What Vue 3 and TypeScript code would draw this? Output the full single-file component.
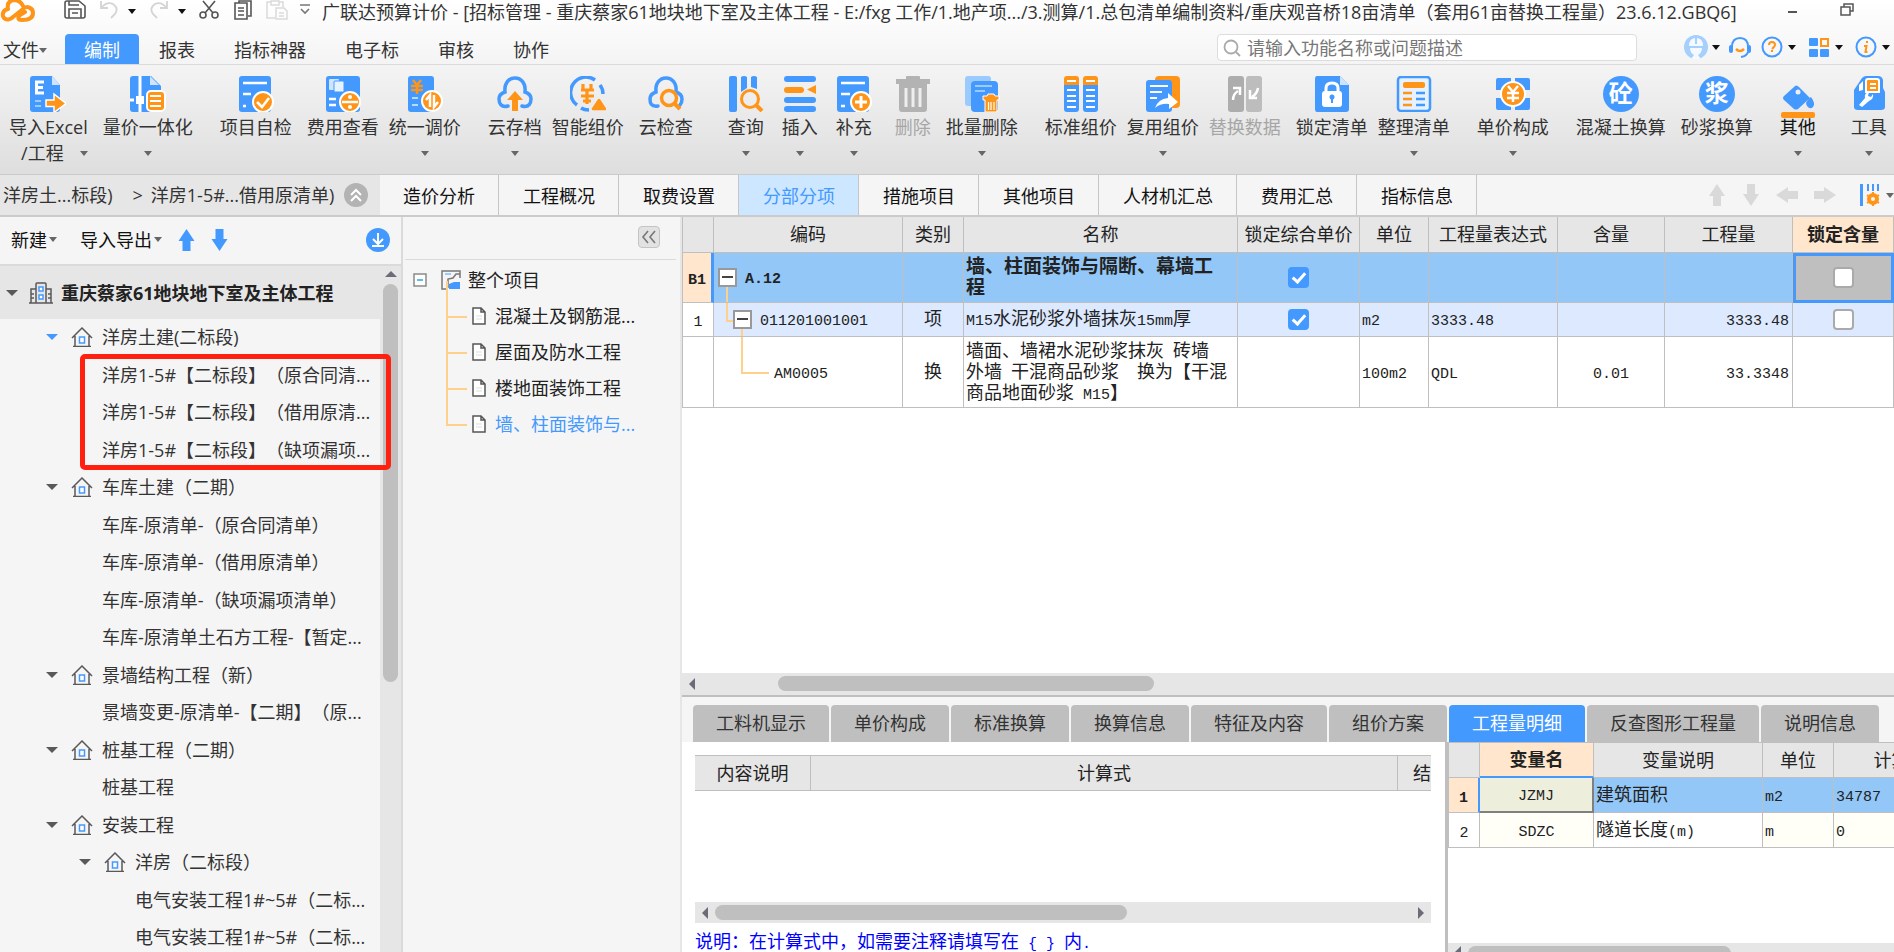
<script setup lang="ts">
import { ref } from 'vue'

type Gap = 'g10' | 'g15' | 'g18' | 'g23' | 'g27' | 'g35'
interface Tool { label: string; icon?: string; disc?: string; gap?: Gap; menu?: boolean; disabled?: boolean; second?: string; strong?: boolean }
interface Node { text: string; level: number; open?: boolean; active?: boolean }

const menus = ['编制', '报表', '指标神器', '电子标', '审核', '协作']
const activeMenu = ref('编制')

const tools: Tool[] = [
  { label: '导入Excel', second: '/工程', icon: 'excel', menu: true },
  { label: '量价一体化', icon: 'integrate', gap: 'g15', menu: true },
  { label: '项目自检', icon: 'check', gap: 'g27' },
  { label: '费用查看', icon: 'fee', gap: 'g15' },
  { label: '统一调价', icon: 'adjust', gap: 'g10', menu: true },
  { label: '云存档', icon: 'cloudup', gap: 'g27', menu: true },
  { label: '智能组价', icon: 'smart', gap: 'g10' },
  { label: '云检查', icon: 'cloudfind', gap: 'g15' },
  { label: '查询', icon: 'query', gap: 'g35', menu: true },
  { label: '插入', icon: 'insert', gap: 'g18', menu: true },
  { label: '补充', icon: 'supply', gap: 'g18', menu: true },
  { label: '删除', icon: 'trash', gap: 'g23', disabled: true },
  { label: '批量删除', icon: 'batch', gap: 'g15', menu: true },
  { label: '标准组价', icon: 'standard', gap: 'g27' },
  { label: '复用组价', icon: 'reuse', gap: 'g10', menu: true },
  { label: '替换数据', icon: 'replace', gap: 'g10', disabled: true },
  { label: '锁定清单', icon: 'lock', gap: 'g15' },
  { label: '整理清单', icon: 'arrange', gap: 'g10', menu: true },
  { label: '单价构成', icon: 'price', gap: 'g27', menu: true },
  { label: '混凝土换算', disc: '砼', gap: 'g27' },
  { label: '砂浆换算', disc: '浆', gap: 'g15' },
  { label: '其他', icon: 'bucket', gap: 'g27', menu: true, strong: true },
  { label: '工具', icon: 'toolbox', gap: 'g35', menu: true },
]

const pages = ['造价分析', '工程概况', '取费设置', '分部分项', '措施项目', '其他项目', '人材机汇总', '费用汇总', '指标信息']
const activePage = ref('分部分项')

const nodes: Node[] = [
  { text: '洋房土建(二标段)', level: 1, open: true, active: true },
  { text: '洋房1-5#【二标段】（原合同清...', level: 1 },
  { text: '洋房1-5#【二标段】（借用原清...', level: 1 },
  { text: '洋房1-5#【二标段】（缺项漏项...', level: 1 },
  { text: '车库土建（二期）', level: 1, open: true },
  { text: '车库-原清单-（原合同清单）', level: 1 },
  { text: '车库-原清单-（借用原清单）', level: 1 },
  { text: '车库-原清单-（缺项漏项清单）', level: 1 },
  { text: '车库-原清单土石方工程-【暂定...', level: 1 },
  { text: '景墙结构工程（新）', level: 1, open: true },
  { text: '景墙变更-原清单-【二期】（原...', level: 1 },
  { text: '桩基工程（二期）', level: 1, open: true },
  { text: '桩基工程', level: 1 },
  { text: '安装工程', level: 1, open: true },
  { text: '洋房（二标段）', level: 2, open: true },
  { text: '电气安装工程1#~5#（二标...', level: 2 },
  { text: '电气安装工程1#~5#（二标...', level: 2 },
]

const sections = ['混凝土及钢筋混...', '屋面及防水工程', '楼地面装饰工程', '墙、柱面装饰与...']
const activeSection = ref('墙、柱面装饰与...')

const columns = ['编码', '类别', '名称', '锁定综合单价', '单位', '工程量表达式', '含量', '工程量', '锁定含量']

const details = ['工料机显示', '单价构成', '标准换算', '换算信息', '特征及内容', '组价方案', '工程量明细', '反查图形工程量', '说明信息']
const activeDetail = ref('工程量明细')

const priceLock = ref([true, true])
const contentLock = ref([false, false])

// Latin runs use a monospaced face half as wide as the ideographs around them.
const runs = (s: string) =>
  s.split(/([\x20-\x7e]+)/).filter(Boolean).map(t => ({ t, latin: /^[\x20-\x7e]/.test(t) }))
</script>

<template>
  <div class="app">
    <svg class="defs" aria-hidden="true">
      <symbol id="excel" viewBox="0 0 36 36">
        <path d="M3 0h19l8 9v24q0 3-3 3H3q-3 0-3-3V3q0-3 3-3z" fill="#4499ff" /><path d="M22 0l8 9h-8z" fill="#cfe5ff" />
        <path d="M14 6H6.500v11H14M6 11.500h7" fill="none" stroke="#fff" stroke-width="3" />
        <path d="M5 25h6M5 30h6" stroke="#9bcaff" stroke-width="2" />
        <path d="M16 24h8v-6l12 9.500-12 9v-6h-8z" fill="#ff9518" stroke="#fff" stroke-width="1.500" />
      </symbol>
      <symbol id="integrate" viewBox="0 0 36 36">
        <path d="M3 0h18l10 10v26H3q-3 0-3-3V3q0-3 3-3z" fill="#4499ff" /><path d="M20 0l9 9h-9z" fill="#cfe5ff" />
        <path d="M10 0v20M10 28v8M0 24h4" stroke="#fff" stroke-width="3" /><rect x="6" y="20" width="8" height="8" fill="#fff" />
        <rect x="17" y="15" width="18" height="20" rx="4" fill="#ff9518" stroke="#fff" stroke-width="2" />
        <path d="M20 20h11M20 25h11M20 30h11" stroke="#fff" stroke-width="2" />
      </symbol>
      <symbol id="check" viewBox="0 0 36 36">
        <rect x="1" width="32" height="36" rx="3" fill="#4499ff" /><path d="M5 7h24M5 18h8M5 30h3" stroke="#fff" stroke-width="2.500" />
        <circle cx="25" cy="26" r="10" fill="#ff9518" stroke="#fff" stroke-width="2" /><path d="M19 26l5 5 7-9" fill="none" stroke="#fff" stroke-width="2.500" />
      </symbol>
      <symbol id="fee" viewBox="0 0 36 36">
        <rect x="1" width="34" height="36" rx="3" fill="#4499ff" /><rect x="4" y="3" width="10" height="11" rx="1" fill="#cfe5ff" /><rect x="9" y="5" width="10" height="11" rx="1" fill="#e6f2ff" stroke="#4499ff" stroke-width="1" />
        <path d="M4 23h7M4 29h7" stroke="#fff" stroke-width="2.500" /><circle cx="25" cy="26" r="10" fill="#ff9518" stroke="#fff" stroke-width="2" />
        <path d="M17 26h16" stroke="#fff" stroke-width="2.500" /><circle cx="25" cy="21" r="2" fill="#fff" /><circle cx="25" cy="31" r="2" fill="#fff" />
      </symbol>
      <symbol id="adjust" viewBox="0 0 36 36">
        <rect x="1" width="26" height="36" rx="3" fill="#4499ff" /><path d="M6 4l4 5 4-5M4 10h12M4 14h12M10 9v9" fill="none" stroke="#ff9518" stroke-width="2.500" />
        <path d="M5 22h6M5 29h6" stroke="#b9daff" stroke-width="2" /><circle cx="25" cy="25" r="10" fill="#ff9518" stroke="#fff" stroke-width="2" />
        <path d="M23 31V19l-4 5M27 19v12l4-5" fill="none" stroke="#fff" stroke-width="2.500" />
      </symbol>
      <symbol id="cloudup" viewBox="0 0 36 36">
        <path d="M11 30C4 32 2 27 2 23q0-5 6-7C7 7 12 2 18 2s11 5 10 14q6 2 6 7c0 4-2 9-9 7" fill="none" stroke="#4499ff" stroke-width="3.500" stroke-linecap="round" />
        <path d="M18 15l8 9h-5v11h-6V24h-5z" fill="#ff9518" />
      </symbol>
      <symbol id="smart" viewBox="0 0 36 36">
        <path d="M25 4A15 15 0 1 0 7 29M30 9q3 4 3 9M11 32q3 2 8 2" fill="none" stroke="#4499ff" stroke-width="3.500" />
        <path d="M13 8v5M21 8v5M11 14h13M11 20h13M17 13v15M13 25h8" fill="none" stroke="#ff9518" stroke-width="3.200" />
        <path d="M29 24l6 9H23z" fill="#ff9518" stroke="#ff9518" stroke-width="2.500" stroke-linejoin="round" />
      </symbol>
      <symbol id="cloudfind" viewBox="0 0 36 36">
        <path d="M10 30C3 31 2 27 2 23q0-5 6-7C7 7 12 2 18 2s11 5 10 14q6 2 6 7c0 3-1 5-2 6" fill="none" stroke="#4499ff" stroke-width="3.500" stroke-linecap="round" />
        <circle cx="21" cy="22" r="7.500" fill="none" stroke="#ff9518" stroke-width="3.500" /><path d="M26 27l6 6" stroke="#ff9518" stroke-width="4" />
      </symbol>
      <symbol id="query" viewBox="0 0 36 36">
        <rect x="1" width="8" height="36" rx="2" fill="#4499ff" /><path d="M13 1q3-2 6 0v11l-6 4zM23 1q3-2 6 0v12l-6-2z" fill="#4499ff" />
        <circle cx="22" cy="23" r="8.500" fill="none" stroke="#ff9518" stroke-width="3" /><path d="M28 29l6 6" stroke="#ff9518" stroke-width="4" />
      </symbol>
      <symbol id="insert" viewBox="0 0 36 36">
        <rect x="2" width="32" height="6" rx="3" fill="#4499ff" /><rect x="2" y="11" width="20" height="6" rx="3" fill="#ff9518" /><path d="M34 9v9l-9-4.500z" fill="#ff9518" />
        <rect x="2" y="21" width="32" height="6" rx="3" fill="#4499ff" /><rect x="2" y="30" width="32" height="6" rx="3" fill="#4499ff" />
      </symbol>
      <symbol id="supply" viewBox="0 0 36 36">
        <rect x="1" width="32" height="36" rx="3" fill="#4499ff" /><path d="M5 7h24M5 18h9M5 30h4" stroke="#fff" stroke-width="2.500" />
        <circle cx="25" cy="26" r="10" fill="#ff9518" stroke="#fff" stroke-width="2" /><path d="M19 26h12M25 20v12" stroke="#fff" stroke-width="3" />
      </symbol>
      <symbol id="trash" viewBox="0 0 36 36">
        <path d="M1 3h10V1q0-1 1-1h12q1 0 1 1v2h10v5H1zM4 8h28v25q0 3-3 3H7q-3 0-3-3z" fill="#b3b3b3" />
        <path d="M11 12v19M18 12v19M25 12v19" stroke="#eee" stroke-width="3" />
      </symbol>
      <symbol id="batch" viewBox="0 0 36 36">
        <rect x="1" width="26" height="30" rx="3" fill="#9bcaff" /><rect x="7" y="5" width="27" height="31" rx="4" fill="#4499ff" /><path d="M11 10h17M11 15h10" stroke="#9bcaff" stroke-width="2" />
        <path d="M19 20h4l1-2h6l1 2h4v4h-2v12H21V24h-2z" fill="#ff9518" stroke="#fff" stroke-width="1" /><path d="M24.500 26v8M27 26v8M30 26v8" stroke="#fff" stroke-width="1.200" />
      </symbol>
      <symbol id="standard" viewBox="0 0 36 36">
        <path d="M1 9V3q0-3 3-3h9q3 0 3 3v6zM20 9V3q0-3 3-3h9q3 0 3 3v6z" fill="#ff9518" />
        <path d="M1 9h15v24q0 3-3 3H4q-3 0-3-3zM20 9h15v24q0 3-3 3h-9q-3 0-3-3z" fill="#4499ff" />
        <path d="M4 5h9M4 14h9M4 20h9M4 25h9M4 31h9M23 5h9M23 14h9M23 20h9M23 25h9M23 31h9" stroke="#fff" stroke-width="2" />
      </symbol>
      <symbol id="reuse" viewBox="0 0 36 36">
        <rect x="10" width="25" height="32" rx="4" fill="#ff9518" /><rect x="1" y="4" width="26" height="32" rx="3" fill="#4499ff" />
        <path d="M5 10h18M5 16h12M5 22h7" stroke="#fff" stroke-width="2" />
        <path d="M10 32q3-9 13-10v-5l10 9-9 7v-5q-8-1-14 4z" fill="#fff" />
      </symbol>
      <symbol id="replace" viewBox="0 0 36 36">
        <rect x="1" width="16" height="36" rx="3" fill="#adadad" /><rect x="19" width="16" height="36" rx="3" fill="#bdbdbd" />
        <path d="M6 24q0-6 5-9M6 12h7v7M31 12q-1 6-6 9M23 14v8h7" fill="none" stroke="#fff" stroke-width="2.500" />
      </symbol>
      <symbol id="lock" viewBox="0 0 36 36">
        <path d="M3 0h23l9 9v24q0 3-3 3H3q-2 0-2-3V3q0-3 2-3z" fill="#4499ff" /><path d="M26 0l9 9h-9z" fill="#cfe5ff" />
        <rect x="8" y="15" width="20" height="16" rx="3" fill="#fff" /><path d="M12 16v-4q0-5 6-5t6 5v4" fill="none" stroke="#fff" stroke-width="3" />
        <circle cx="18" cy="21" r="2.500" fill="#4499ff" /><path d="M18 21v6" stroke="#4499ff" stroke-width="2" />
      </symbol>
      <symbol id="arrange" viewBox="0 0 36 36">
        <rect x="2" y="1" width="32" height="34" rx="3" fill="#e6f2ff" stroke="#4499ff" stroke-width="2.500" /><rect x="7" y="6" width="22" height="6" rx="2" fill="#ff9518" />
        <path d="M7 17h9M7 23h9M7 29h9" stroke="#ff9518" stroke-width="2.500" /><path d="M20 17h9M20 23h9M20 29h9" stroke="#4499ff" stroke-width="2.500" />
      </symbol>
      <symbol id="price" viewBox="0 0 36 36">
        <path d="M3 2h13v12H1V4q0-2 2-2zM20 2h13q2 0 2 2v10H20zM1 22h15v12H3q-2 0-2-2zM20 22h15v10q0 2-2 2H20z" fill="#4499ff" />
        <circle cx="18" cy="18" r="12" fill="#ff9518" stroke="#fff" stroke-width="2" /><path d="M13 10l5 6 5-6M12 17h12M12 22h12M18 16v10" fill="none" stroke="#fff" stroke-width="2.500" />
      </symbol>
      <symbol id="bucket" viewBox="0 0 36 36">
        <path d="M14 4q2-3 5 0l11 11-12 11q-2 1-4 0L4 17q-2-2 0-4z" fill="#4499ff" /><circle cx="18" cy="9" r="2.500" fill="#eee" /><path d="M31 14q5 7 2 10t-6-1 4-9z" fill="#4499ff" />
        <rect x="1" y="29" width="34" height="6" rx="2" fill="#ff9518" />
      </symbol>
      <symbol id="toolbox" viewBox="0 0 36 36">
        <path d="M3 14L11 2q2-2 4-2h12q4 0 5 4v8l2 4v15q0 3-4 3H7q-4 0-4-3z" fill="#4499ff" /><path d="M8 15V9l4-4v9z" fill="#fff" /><path d="M15 16V5q0-2 2-2h9q2 0 2 2v11z" fill="#ff9518" stroke="#fff" stroke-width="2" />
        <path d="M19 8h6M19 12h6" stroke="#fff" stroke-width="2" /><path d="M8 29l6-7q-1-5 4-6l-1 4 3 1 2-3q1 5-4 7l-7 6z" fill="#fff" />
      </symbol>
      <symbol id="up" viewBox="0 0 16 22"><path d="M8 0l8 12h-4v10H4V12H0z" fill="currentColor" /></symbol>
      <symbol id="down" viewBox="0 0 16 22"><path d="M8 22l8-12h-4V0H4v10H0z" fill="currentColor" /></symbol>
      <symbol id="left" viewBox="0 0 22 16"><path d="M0 8l12-8v4h10v8H12v4z" fill="currentColor" /></symbol>
      <symbol id="right" viewBox="0 0 22 16"><path d="M22 8L10 0v4H0v8h10v4z" fill="currentColor" /></symbol>
      <symbol id="house" viewBox="0 0 22 20">
        <path d="M1 11L11 1l10 10M4 9v10M18 9v10M2 19.500h18" fill="none" stroke="#595959" stroke-width="1.500" /><path d="M8.500 10h5v6h-5z" fill="#fff" stroke="#4499ff" stroke-width="1.500" />
      </symbol>
      <symbol id="page" viewBox="0 0 14 18"><path d="M1 1h8l4 4v12H1zM9 1v4h4" fill="#fff" stroke="#555" stroke-width="1.500" /><path d="M4 9h6M4 12h6" stroke="#ddd" /></symbol>
    </svg>

    <header class="top">
      <div class="titlebar">
        <svg class="logo" viewBox="0 0 36 24" aria-hidden="true"><path d="M23 6C21 1 17 0 13 0 9 1 7 4 8 9 2 10 2 16 4 18 7 21 11 19 13 17L23 9C27 5 33 8 33 13 33 18 28 20 22 20 17 20 18 17 20 15L25 12" fill="none" stroke="#ff9518" stroke-width="4" stroke-linejoin="round" stroke-linecap="round" /></svg>
        <button class="qa save" aria-label="保存"><svg viewBox="0 0 22 20"><path d="M1 3q0-2 2-2h12l6 5v10q0 2-2 2H3q-2 0-2-2zM5 1v4h10M5 18V9h12v9M8 13h6" fill="none" stroke="#555" stroke-width="1.600" /></svg></button>
        <button class="qa undo" aria-label="撤销"><svg viewBox="0 0 22 20"><path d="M3 1v7h7M3 8q6-7 12-4 6 4 2 10l-4 4" fill="none" stroke="#d4d4d4" stroke-width="1.800" /></svg></button>
        <i class="caret dark" />
        <button class="qa redo" aria-label="恢复"><svg viewBox="0 0 22 20"><path d="M19 1v7h-7M19 8Q13 1 7 4q-6 4-2 10l4 4" fill="none" stroke="#d4d4d4" stroke-width="1.800" /></svg></button>
        <i class="caret dark" />
        <button class="qa cut" aria-label="剪切"><svg viewBox="0 0 22 20"><path d="M5 1l10 12M17 1L7 13" fill="none" stroke="#555" stroke-width="1.600" /><circle cx="5" cy="15" r="3" fill="none" stroke="#555" stroke-width="1.600" /><circle cx="17" cy="15" r="3" fill="none" stroke="#555" stroke-width="1.600" /></svg></button>
        <button class="qa copy" aria-label="复制"><svg viewBox="0 0 22 20"><path d="M7 3V1h12v15h-3M3 3h12v16H3zM6 8h6M6 11h6M6 15h6" fill="none" stroke="#555" stroke-width="1.600" /></svg></button>
        <button class="qa paste" aria-label="粘贴"><svg viewBox="0 0 22 20"><path d="M9 18H1V2h4M13 2h4v5M5 1h8v4H5zM10 8h8l3 3v8H10zM13 13h5M13 16h5" fill="none" stroke="#dadada" stroke-width="1.500" /></svg></button>
        <button class="qa more" aria-label="自定义"><svg viewBox="0 0 10 12"><path d="M0 1h10M1 5l4 4 4-4" fill="none" stroke="#777" stroke-width="1.600" /></svg></button>
        <h1>广联达预算计价 - [招标管理 - 重庆蔡家61地块地下室及主体工程 - E:/fxg 工作/1.地产项.../3.测算/1.总包清单编制资料/重庆观音桥18亩清单（套用61亩替换工程量）23.6.12.GBQ6]</h1>
        <div class="window">
          <button aria-label="最小化"><svg viewBox="0 0 14 14"><path d="M2 9h9" stroke="#555" stroke-width="2" /></svg></button>
          <button aria-label="还原"><svg viewBox="0 0 14 14"><path d="M4 4V1h9v7h-3M1 4h9v8H1z" fill="none" stroke="#555" stroke-width="1.500" /></svg></button>
          <button aria-label="关闭"><svg viewBox="0 0 14 14"><path d="M1 1l12 12M13 1L1 13" stroke="#555" stroke-width="1.500" /></svg></button>
        </div>
      </div>

      <div class="menubar">
        <button class="file">文件<i class="caret small" /></button>
        <nav>
          <button v-for="m in menus" :key="m" :class="{ on: m === activeMenu }" @click="activeMenu = m">{{ m }}</button>
        </nav>
        <label class="search">
          <svg viewBox="0 0 18 18" aria-hidden="true"><circle cx="8" cy="8" r="6.500" fill="none" stroke="#aaa" stroke-width="1.800" /><path d="M13 13l4 4" stroke="#aaa" stroke-width="1.800" /></svg>
          <input type="text" placeholder="请输入功能名称或问题描述" aria-label="搜索功能">
        </label>
        <div class="account">
          <button aria-label="用户"><svg viewBox="0 0 24 24"><circle cx="12" cy="12" r="12" fill="#a5cffd" /><path d="M5 11q0-8 7-8t7 8zM6 13h12q0 5-4 7l3 4H7l3-4q-4-2-4-7z" fill="#f4f9ff" /><path d="M12 3v6" stroke="#a5cffd" stroke-width="2" /></svg><i class="caret dark" /></button>
          <button class="headset" aria-label="客服"><svg viewBox="0 0 24 24"><path d="M4 12q0-9 8-9t8 9" fill="none" stroke="#4499ff" stroke-width="2" /><rect x="1" y="10" width="4" height="8" rx="2" fill="#4499ff" /><rect x="19" y="10" width="4" height="8" rx="2" fill="#4499ff" /><path d="M20 17q-1 4-7 5" fill="none" stroke="#4499ff" stroke-width="2" /><path d="M8 14q4 4 8 0" fill="none" stroke="#ff9518" stroke-width="2.500" /></svg></button>
          <button aria-label="帮助"><svg viewBox="0 0 24 24"><circle cx="12" cy="12" r="9.500" fill="none" stroke="#4499ff" stroke-width="2" /><path d="M9 10q0-3 3-3t3 3q0 1-3 4M12 15v2" fill="none" stroke="#ff9518" stroke-width="2" /></svg><i class="caret dark" /></button>
          <button aria-label="应用"><svg viewBox="0 0 24 24"><rect x="2" y="3" width="9" height="8" rx="1" fill="#4499ff" /><rect x="14" y="4" width="7" height="7" fill="none" stroke="#ff9518" stroke-width="2" /><rect x="2" y="14" width="9" height="8" rx="1" fill="#4499ff" /><rect x="13" y="14" width="9" height="8" rx="1" fill="#4499ff" /></svg><i class="caret dark" /></button>
          <button aria-label="关于"><svg viewBox="0 0 24 24"><circle cx="12" cy="12" r="9.500" fill="none" stroke="#4499ff" stroke-width="2" /><path d="M13 6v2M10 11h2.500l-1 6h2" fill="none" stroke="#ff9518" stroke-width="2" /></svg><i class="caret dark" /></button>
        </div>
      </div>
    </header>

    <div class="ribbon">
      <button v-for="t in tools" :key="t.label" class="tool" :class="[t.gap, { strong: t.strong }]" :disabled="t.disabled">
        <span v-if="t.disc" class="disc">{{ t.disc }}</span>
        <svg v-else class="tool-icon" aria-hidden="true"><use :href="'#' + t.icon" /></svg>
        <span class="tool-label">{{ t.label }}</span>
        <span class="tool-foot"><span v-if="t.second" class="tool-second">{{ t.second }}</span><i v-if="t.menu" class="caret small" /></span>
      </button>
    </div>

    <div class="pagebar">
      <div class="crumbs">
        <a href="#">洋房土...标段)</a><span class="sep">&gt;</span><a href="#">洋房1-5#...借用原清单)</a>
        <button class="fold" aria-label="收起"><svg viewBox="0 0 24 24"><circle cx="12" cy="12" r="12" fill="#b3b3b3" /><path d="M7 12l5-5 5 5M7 18l5-5 5 5" fill="none" stroke="#fff" stroke-width="2" /></svg></button>
      </div>
      <button v-for="p in pages" :key="p" class="page" :class="{ on: p === activePage }" @click="activePage = p">{{ p }}</button>
      <div class="moves">
        <button aria-label="上移"><svg class="v"><use href="#up" /></svg></button>
        <button aria-label="下移"><svg class="v"><use href="#down" /></svg></button>
        <button aria-label="左移"><svg class="h"><use href="#left" /></svg></button>
        <button aria-label="右移"><svg class="h"><use href="#right" /></svg></button>
        <button class="cols" aria-label="列设置"><svg viewBox="0 0 20 22"><path d="M1.500 0v22" stroke="#4499ff" stroke-width="3" /><path d="M8 0v7M13 0v7M18 0v7" stroke="#4499ff" stroke-width="2" /><circle cx="13" cy="15" r="4" fill="none" stroke="#ff9518" stroke-width="4" /><path d="M13 8v14M7 11l12 8M19 11L7 19" stroke="#ff9518" stroke-width="2" /><circle cx="13" cy="15" r="2" fill="#f5f5f5" /></svg><i class="caret small" /></button>
      </div>
    </div>

    <main>
      <aside class="project">
        <div class="project-tools">
          <button>新建<i class="caret small" /></button>
          <button class="io">导入导出<i class="caret small" /></button>
          <button class="arrow" aria-label="上移"><svg><use href="#up" /></svg></button>
          <button class="arrow" aria-label="下移"><svg><use href="#down" /></svg></button>
          <button class="collect" aria-label="收起面板"><svg viewBox="0 0 24 24"><circle cx="12" cy="12" r="12" fill="#4499ff" /><path d="M12 5v10M7 11l5 5 5-5M6 18h12" fill="none" stroke="#fff" stroke-width="2" /></svg></button>
        </div>
        <div class="project-body">
          <div class="tree">
            <div class="root">
              <i class="caret wide" />
              <svg class="building" viewBox="0 0 24 22" aria-hidden="true"><path d="M7 21V2q0-1 1-1h8q1 0 1 1v19M7 7H2v14M17 7h5v14M0 21h24M2 12h3M2 16h3M19 12h3M19 16h3" fill="none" stroke="#595959" stroke-width="1.500" /><path d="M10 5h4v4h-4zM10 13h4v4h-4z" fill="#fff" stroke="#4499ff" stroke-width="1.500" /></svg>
              <b>重庆蔡家61地块地下室及主体工程</b>
            </div>
            <ul>
              <li v-for="(n, i) in nodes" :key="i" :class="['l' + n.level, { branch: n.open, active: n.active }]">
                <template v-if="n.open"><i class="caret wide" /><svg class="house" aria-hidden="true"><use href="#house" /></svg></template>
                <span>{{ n.text }}</span>
              </li>
            </ul>
            <div class="frame" />
          </div>
          <div class="vscroll"><i class="tri-up" /><i class="vthumb" /></div>
        </div>
      </aside>

      <aside class="outline">
        <div class="outline-tools"><button aria-label="折叠"><svg viewBox="0 0 18 18"><path d="M8 3L3 9l5 6M15 3l-5 6 5 6" fill="none" stroke="#777" stroke-width="1.600" /></svg></button></div>
        <div class="outline-root">
          <svg class="box" viewBox="0 0 14 14" aria-hidden="true"><path d="M1 1h12v12H1z" fill="#fff" stroke="#8a8a8a" stroke-width="1.500" /><path d="M4 7h6" stroke="#29a9e0" stroke-width="1.500" /></svg>
          <svg class="chart" viewBox="0 0 20 20" aria-hidden="true"><path d="M19 8V1H1v18h6M7 18V9l5-1 3-4h4" fill="none" stroke="#777" stroke-width="1.500" /><path d="M8 19v-5l5-2h6v7z" fill="#4499ff" /><path d="M4 4h6" stroke="#9bcaff" stroke-width="2" /></svg>
          <span>整个项目</span>
        </div>
        <ul>
          <li v-for="s in sections" :key="s" :class="{ on: s === activeSection }" @click="activeSection = s">
            <svg aria-hidden="true"><use href="#page" /></svg><span>{{ s }}</span>
          </li>
        </ul>
      </aside>

      <section class="work">
        <div class="sheet">
          <table class="grid">
            <colgroup><col class="c0"><col class="c1"><col class="c2"><col class="c3"><col class="c4"><col class="c5"><col class="c6"><col class="c7"><col class="c8"><col class="c9"></colgroup>
            <thead><tr><th /><th v-for="c in columns" :key="c" :class="{ hot: c === '锁定含量' }">{{ c }}</th></tr></thead>
            <tbody>
              <tr class="picked">
                <th class="num hot"><span class="latin">B1</span></th>
                <td class="code r1"><span class="minus" /><span class="latin">A.12</span></td><td />
                <td class="name">墙、柱面装饰与隔断、幕墙工<br>程</td>
                <td class="mid"><input v-model="priceLock[0]" type="checkbox" aria-label="锁定综合单价"></td>
                <td /><td /><td /><td />
                <td class="mid current"><input v-model="contentLock[0]" type="checkbox" aria-label="锁定含量"></td>
              </tr>
              <tr class="tint">
                <th class="num"><span class="latin">1</span></th>
                <td class="code r2"><span class="minus" /><span class="latin">011201001001</span></td><td class="mid">项</td>
                <td class="name"><span v-for="(r, i) in runs('M15水泥砂浆外墙抹灰15mm厚')" :key="i" :class="{ latin: r.latin }">{{ r.t }}</span></td>
                <td class="mid"><input v-model="priceLock[1]" type="checkbox" aria-label="锁定综合单价"></td>
                <td><span class="latin">m2</span></td><td><span class="latin">3333.48</span></td><td />
                <td class="end"><span class="latin">3333.48</span></td>
                <td class="mid"><input v-model="contentLock[1]" type="checkbox" aria-label="锁定含量"></td>
              </tr>
              <tr class="tall">
                <th class="num" />
                <td class="code r3"><span class="latin">AM0005</span></td><td class="mid">换</td>
                <td class="name"><div v-for="line in ['墙面、墙裙水泥砂浆抹灰 砖墙', '外墙 干混商品砂浆  换为【干混', '商品地面砂浆 M15】']" :key="line"><span v-for="(r, i) in runs(line)" :key="i" :class="{ latin: r.latin }">{{ r.t }}</span></div></td>
                <td /><td><span class="latin">100m2</span></td><td><span class="latin">QDL</span></td>
                <td class="mid"><span class="latin">0.01</span></td><td class="end"><span class="latin">33.3348</span></td><td />
              </tr>
            </tbody>
          </table>
        </div>
        <div class="hscroll main-scroll"><i class="tri-left" /><i class="hthumb" /></div>

        <div class="detail-tabs">
          <button v-for="d in details" :key="d" :class="{ on: d === activeDetail }" @click="activeDetail = d">{{ d }}</button>
        </div>
        <div class="detail">
          <div class="formula">
            <table>
              <colgroup><col class="f1"><col><col class="f3"></colgroup>
              <thead><tr><th>内容说明</th><th>计算式</th><th class="cut-off">结</th></tr></thead>
            </table>
            <div class="hscroll formula-scroll"><i class="tri-left" /><i class="hthumb" /><i class="tri-right" /></div>
            <p><span v-for="(r, i) in runs('说明：在计算式中，如需要注释请填写在 { } 内.')" :key="i" :class="{ latin: r.latin }">{{ r.t }}</span></p>
          </div>
          <div class="vars">
            <table class="grid">
              <colgroup><col class="v0"><col class="v1"><col class="v2"><col class="v3"><col class="v4"></colgroup>
              <thead><tr><th /><th class="hot">变量名</th><th>变量说明</th><th>单位</th><th>计算结果</th></tr></thead>
              <tbody>
                <tr class="picked"><th class="num hot"><span class="latin">1</span></th><td class="mid current-var"><span class="latin">JZMJ</span></td><td>建筑面积</td><td><span class="latin">m2</span></td><td><span class="latin">34787</span></td></tr>
                <tr><th class="num"><span class="latin">2</span></th><td class="mid soft"><span class="latin">SDZC</span></td><td>隧道长度<span class="latin">(m)</span></td><td class="soft"><span class="latin">m</span></td><td class="soft"><span class="latin">0</span></td></tr>
              </tbody>
            </table>
            <div class="hscroll vars-scroll"><i class="tri-left" /><i class="hthumb" /></div>
          </div>
        </div>
      </section>
    </main>
  </div>
</template>

<style>
body { margin: 0; }
</style>

<style scoped>
* { box-sizing: border-box; }
.app {
  display: flex; flex-direction: column; height: 100vh; overflow: hidden;
  font: 18px/24px "Open Sans", "Noto Sans CJK SC", sans-serif; color: #333; background: #f5f5f5;
  text-spacing-trim: space-all;
}
.defs { position: absolute; width: 0; height: 0; }
button { font: inherit; color: inherit; border: 0; padding: 0; background: none; white-space: nowrap; flex: none; }
a { color: inherit; text-decoration: none; }
ul { list-style: none; margin: 0; padding: 0; }
svg { display: block; flex: none; }
.caret { display: inline-block; flex: none; border: 4px solid transparent; border-top: 5px solid #666; border-bottom: 0; }
.caret.dark { border-top-color: #111; }
.caret.wide { border-width: 6px 6px 0; border-top-color: #595959; }

.top { flex: none; background: linear-gradient(#fff, #f4f4f4); border-bottom: 1px solid #dadada; }
.titlebar { display: flex; align-items: flex-start; height: 34px; overflow: hidden; }
.logo { width: 36px; height: 24px; }
.qa svg { width: 22px; height: 20px; }
.titlebar .caret { margin-top: 9px; }
.save { margin-left: 28px; }
.undo { margin-left: 12px; }
.undo + .caret, .redo + .caret { margin-left: 8px; }
.redo { margin-left: 12px; }
.cut { margin-left: 12px; }
.copy { margin-left: 12px; }
.paste { margin-left: 12px; }
.qa.more { margin: 4px 12px 0; }
.qa.more svg { width: 10px; height: 12px; }
h1 { margin: 0; font-size: 18px; font-weight: 400; line-height: 25px; white-space: nowrap; flex: 1; min-width: 0; overflow: hidden; }
.window { display: flex; flex: none; gap: 40px; margin: 3px -14px 0 0; }
.window svg { width: 14px; height: 14px; }
.menubar { display: flex; align-items: stretch; height: 30px; }
.file { display: flex; align-items: center; width: 65px; padding: 2px 0 0 3px; }
.menubar nav { display: flex; gap: 1px; }
.menubar nav button { padding: 2px 19px 0; border-radius: 4px 4px 0 0; line-height: 28px; }
.menubar nav .on { background: #4499ff; color: #fff; }
.search { display: flex; align-items: center; width: 420px; height: 27px; margin-left: auto; padding-left: 5px; gap: 6px; background: #fff; border: 1px solid #ddd; border-radius: 4px; }
.search svg { width: 18px; height: 18px; }
.search input { flex: 1; min-width: 0; border: 0; outline: 0; padding: 0; background: none; font: inherit; color: #333; }
.search input::placeholder { color: #777; opacity: 1; }
.account { display: flex; align-items: center; flex: none; gap: 11px; margin: 0 4px 4px 47px; }
.account button { display: flex; align-items: center; gap: 4px; }
.account svg { width: 24px; height: 24px; }
.account .headset { margin: 0 -3px; }

.ribbon { display: flex; flex: none; height: 110px; padding: 11px 0 0 9px; overflow: hidden; background: linear-gradient(#f4f4f4, #dedede); border-bottom: 1px solid #cbcbcb; }
.tool { display: flex; flex-direction: column; align-items: center; }
.tool:disabled { color: #a6a6a6; }
.tool-icon { width: 36px; height: 36px; }
.disc { width: 36px; height: 36px; border-radius: 50%; background: #4499ff; color: #fff; font-size: 24px; font-weight: 700; line-height: 34px; text-align: center; }
.tool-label { line-height: 26px; margin-top: 2px; }
.tool-foot { display: flex; align-items: center; justify-content: center; height: 26px; width: 100%; }
.tool-second { margin: 0 16px 0 12px; }
.strong { color: #111; }
.strong .tool-icon { margin: 7px 0 -7px; }
.g10 { margin-left: 10px; }
.g15 { margin-left: 15px; }
.g18 { margin-left: 18px; }
.g23 { margin-left: 23px; }
.g27 { margin-left: 27px; }
.g35 { margin-left: 35px; }

.pagebar { display: flex; flex: none; height: 42px; border-bottom: 2px solid #cbcbcb; background: #f5f5f5; }
.crumbs { display: flex; align-items: center; flex: none; width: 380px; padding-left: 3px; background: #e6e6e6; white-space: nowrap; }
.crumbs .sep { margin: 0 8px 0 20px; }
.fold { margin-left: auto; margin-right: 12px; }
.fold svg { width: 24px; height: 24px; }
.page { padding: 2px 23px 0; color: #111; border-right: 1px solid #c6c6c6; }
.page + .page { padding-left: 24px; }
.page.on { background: #cce7ff; color: #4499ff; }
.moves { display: flex; align-items: center; gap: 16px; margin-left: auto; color: #d9d9d9; }
.moves .v { width: 18px; height: 22px; }
.moves .h { width: 22px; height: 18px; }
.cols { display: flex; align-items: center; gap: 6px; margin-left: 8px; }
.cols svg { width: 20px; height: 22px; }

main { display: flex; flex: 1; min-height: 0; }
.project { display: flex; flex-direction: column; flex: none; width: 403px; border-right: 2px solid #dadada; }
.project-tools { display: flex; align-items: center; flex: none; height: 49px; padding: 0 11px 2px; border-bottom: 2px solid #dadada; color: #111; }
.project-tools button { display: flex; align-items: center; }
.project-tools .io { margin-left: 23px; }
.project-tools .arrow { margin-left: 16px; color: #4499ff; }
.project-tools .caret { margin-left: 2px; }
.arrow svg { width: 17px; height: 22px; }
.collect.collect { margin-left: auto; }
.collect svg { width: 24px; height: 24px; }
.project-body { display: flex; flex: 1; min-height: 0; }
.tree { position: relative; flex: 1; min-width: 0; overflow: visible; }
.root { display: flex; align-items: center; height: 53px; padding-left: 6px; background: #e6e6e6; white-space: nowrap; color: #222; }
.building { width: 24px; height: 22px; margin: 0 8px 0 11px; }
.tree ul { display: grid; grid-auto-rows: 38px 37px; }
.tree li { display: flex; align-items: center; padding: 0 0 2px 102px; white-space: nowrap; }
.tree li.l2 { padding-left: 135px; }
.tree li.branch { padding-left: 46px; }
.tree li.branch.l2 { padding-left: 79px; }
.tree .active .caret { border-top-color: #4499ff; }
.house { width: 22px; height: 20px; margin: 0 9px 0 13px; }
.frame { position: absolute; left: 80px; top: 88px; width: 311px; height: 116px; border: 5px solid #ff2010; border-radius: 5px; z-index: 2; pointer-events: none; }
.vscroll { display: flex; flex-direction: column; align-items: center; flex: none; width: 21px; background: #e6e6e6; }
.tri-up { border: 6px solid transparent; border-top: 0; border-bottom: 6px solid #6c6c78; margin: 5px 0 7px; }
.vthumb { width: 15px; height: 58%; border-radius: 8px; background: #bfbfbf; }

.outline { flex: none; width: 279px; border-right: 2px solid #e6e6e6; white-space: nowrap; color: #222; }
.outline-tools { display: flex; justify-content: flex-end; align-items: center; height: 43px; margin: 0 4px 0 2px; padding: 0 16px 2px 0; border-bottom: 1px solid #dadada; }
.outline-tools button { padding: 1px; background: #e2e2e2; border: 1px solid #c4c4c4; border-radius: 4px; }
.outline-tools svg { width: 18px; height: 18px; }
.outline-root { display: flex; align-items: center; height: 39px; padding-left: 10px; }
.box { width: 14px; height: 14px; margin-right: 14px; }
.chart { width: 20px; height: 20px; margin-right: 7px; }
.outline li { position: relative; display: flex; align-items: center; gap: 9px; height: 36px; padding: 0 0 2px 69px; }
.outline li svg { width: 14px; height: 18px; }
.outline li.on { color: #4499ff; }
.outline li::before { content: ""; position: absolute; left: 43px; top: -18px; width: 19px; height: 35px; border-left: 2px solid #ffd08c; border-bottom: 2px solid #ffd08c; }

.work { display: flex; flex-direction: column; flex: 1; min-width: 0; }
.sheet { flex: 1; min-height: 0; background: #fff; overflow: hidden; }
table { border-collapse: separate; border-spacing: 0; table-layout: fixed; width: 100%; color: #222; }
.grid th, .grid td { height: 34px; padding: 0 3px 2px 2px; border: 0 solid #bfbfbf; border-width: 0 1px 1px 0; white-space: pre; overflow: hidden; text-align: left; font-weight: 400; line-height: 21px; }
.grid tr > :first-child { border-left-width: 1px; }
.grid thead th { background: #e6e6e6; text-align: center; height: 36px; padding: 0; }
.grid .hot.hot { background: #ffe6cc; font-weight: 700; }
.grid tbody .num { text-align: center; padding: 0; background: #fff; }
.grid .mid { text-align: center; padding: 0 0 2px; }
.grid .end { text-align: right; }
.latin { font-family: "Liberation Mono", monospace; font-size: 15px; line-height: 15px; }
.picked td { background: #92c7f7; }
.tint td { background: #dce9ff; }
.sheet .picked > * { height: 50px; }
.sheet .picked > td { font-weight: 700; }
.sheet .picked .name { font-size: 19px; }
.sheet .tall > * { height: 71px; }
.sheet .picked .num { border-right: 3px solid #4499ff; }
.sheet .current { background: #bfbfbf; border: 3px solid #4499ff; }
.c0 { width: 32px; } .c1 { width: 189px; } .c2 { width: 61px; } .c4 { width: 122px; } .c5 { width: 69px; } .c6 { width: 129px; } .c7 { width: 107px; } .c8 { width: 128px; } .c9 { width: 101px; }
.code { position: relative; }
.grid .r1 { padding-left: 4px; }
.grid .r2 { padding-left: 19px; }
.grid .r3 { padding-left: 60px; }
.minus { display: inline-block; position: relative; z-index: 1; width: 19px; height: 19px; margin-right: 8px; vertical-align: middle; background: #fff; border: 2px solid #999; }
.minus::before { content: ""; display: block; width: 11px; height: 2px; margin: 6px 2px 0; background: #444; }
.r1::before { content: ""; position: absolute; left: 12px; top: 34px; bottom: 0; border-left: 2px solid #ffd08c; }
.r2::before { content: ""; position: absolute; left: 12px; top: 0; width: 8px; height: 17px; border-left: 2px solid #ffd08c; border-bottom: 2px solid #ffd08c; }
.r2::after { content: ""; position: absolute; left: 27px; top: 26px; bottom: 0; border-left: 2px solid #ffd08c; }
.r3::before { content: ""; position: absolute; left: 27px; top: 0; width: 26px; height: 35px; border-left: 2px solid #ffd08c; border-bottom: 2px solid #ffd08c; }
input[type="checkbox"] { appearance: none; display: inline-block; width: 21px; height: 21px; margin: 0; vertical-align: middle; background: #fff; border: 2px solid #aaa; border-radius: 4px; }
input[type="checkbox"]:checked { background: #4499ff; border-color: #4499ff; }
input[type="checkbox"]:checked::before { content: ""; display: block; width: 5px; height: 10px; margin: 1px 5px; border: solid #fff; border-width: 0 3px 3px 0; transform: rotate(42deg); }

.hscroll { display: flex; align-items: center; flex: none; height: 21px; background: #e6e6e6; }
.tri-left { border: 6px solid transparent; border-left: 0; border-right: 6px solid #6c6c78; margin: 0 7px; }
.tri-right { border: 6px solid transparent; border-right: 0; border-left: 6px solid #6c6c78; margin: 0 7px 0 auto; }
.hthumb { height: 15px; border-radius: 8px; background: #bfbfbf; }
.main-scroll { height: 24px; padding-bottom: 1px; border-bottom: 2px solid #bfbfbf; }
.main-scroll .hthumb { width: 31%; margin-left: 76px; }
.detail-tabs { display: flex; flex: none; gap: 2px; padding: 8px 0 0 11px; background: #f5f5f5; overflow: hidden; }
.detail-tabs button { height: 37px; padding: 0 23px 2px; background: #bfbfbf; border-radius: 4px 4px 0 0; }
.detail-tabs .on { background: #4499ff; color: #fff; }
.detail { display: flex; flex: none; height: 210px; }
.formula { display: flex; flex-direction: column; flex: 1 1 63%; min-width: 0; padding: 13px 14px 0 13px; background: #fff; border-right: 3px solid #bfbfbf; }
.formula th { height: 36px; padding: 0; font-weight: 400; background: #e6e6e6; border: 0 solid #bfbfbf; border-width: 1px 1px 1px 0; overflow: hidden; }
.formula .cut-off { border-right: 0; text-align: right; }
.f1 { width: 116px; } .f3 { width: 33px; }
.formula-scroll { margin-top: auto; }
.formula-scroll .hthumb { width: 56%; }
.formula p { margin: 6px 0 0; height: 23px; white-space: pre; color: #00f; }
.vars { display: flex; flex-direction: column; flex: none; width: 446px; overflow: hidden; background: #fff; border-top: 1px solid #bfbfbf; }
.vars table { width: 538px; flex: none; }
.vars thead th { height: 35px; }
.vars tbody tr > * { height: 35px; }
.vars thead .hot { border-bottom: 2px solid #4499ff; }
.vars .picked .num { border-right: 2px solid #4499ff; }
.vars .current-var { background: #eeeedd; border-right: 2px solid #808080; border-bottom: 2px solid #808080; }
.vars .soft { background: #fffff8; }
.v0 { width: 32px; } .v1 { width: 114px; } .v2 { width: 169px; } .v3 { width: 71px; }
.vars-scroll { margin-top: auto; height: 9px; align-items: flex-start; padding-top: 3px; overflow: hidden; }
.vars-scroll .hthumb { width: 59%; flex: none; }
</style>
